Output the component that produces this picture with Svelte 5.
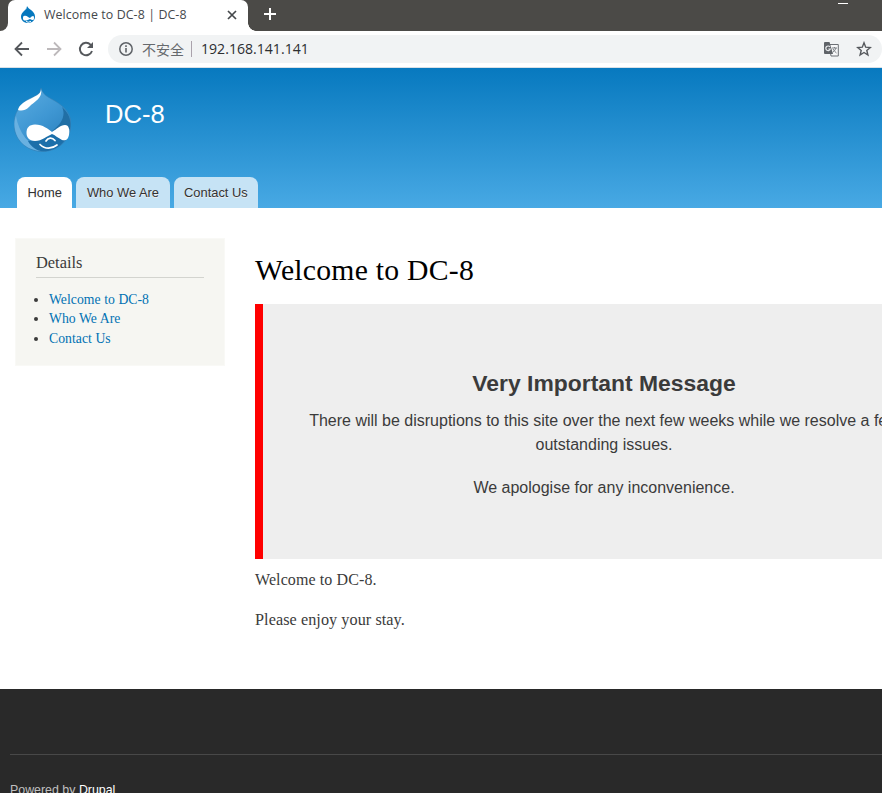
<script>
  const tabs = ['Home', 'Who We Are', 'Contact Us'];
  const links = ['Welcome to DC-8', 'Who We Are', 'Contact Us'];
</script>

{#snippet drop(w, h)}
  <svg class="drop" width={w} height={h} viewBox="0 0 57 65" aria-hidden="true">
    <defs>
      <linearGradient id="dropFill" x1="0" y1="0" x2=".7" y2="1">
        <stop offset="0" stop-color="#5daee2" />
        <stop offset=".55" stop-color="#3f97d3" />
        <stop offset="1" stop-color="#2a80bd" />
      </linearGradient>
    </defs>
    <path d="M27 1C29 8 34 10 41 14C51 20 57 27 57 37C57 53 44 64.500 28.500 64.500C12 64.500 0 52 0 37C0 26 6 18 13 13C20 9 27 8 27 1Z" fill="url(#dropFill)" stroke="#3a7fae" stroke-width=".5" />
    <path d="M2 29C5 46 14 58 31 64C12 65 0.500 52 0.500 37C0.500 34 1 31 2 29Z" fill="#69b1e1" />
    <path d="M48 20C52 28 48 37 38 44L56 42C58 33 54 25 48 20Z" fill="#216fa5" />
    <path d="M27 2C29 11 21 14 15 20C11 24 7 24 4 23C5 18 10 15 14 13C21 9 27 8 27 2Z" fill="#fff" />
    <path d="M14 54C22 55 31 47 38 47L51 53C45 61 37 64.300 29 64.300C23 64 17 60 14 54Z" fill="#1c6faa" />
    <path d="M21 37.500C29 37.500 34 42 38 45C43 42 46 38 51 38C55 38 56 43 55 48C54 53 51 54 48 53C44 51 41 48 38 47C33 49 28 54 21 54C15 54 12.500 50 12.500 46C12.500 41 15 37.500 21 37.500Z" fill="#fff" />
    <path d="M32 54C34 50.500 38 50 41 53.500M26 57.500C31 62.500 38 62 43 58" fill="none" stroke="#fff" stroke-width="1.700" stroke-linecap="round" />
  </svg>
{/snippet}

<div class="window">
  <div class="titlebar">
    <div class="edge"></div>
    <div class="browser-tab">
      <svg width="16" height="17" viewBox="0 0 16 17">
        <path d="M7 0C8 3 15 5 15 10.500C15 14.500 12 17 8 17C4 17 1 14.500 1 10.500C1 6 7 4 7 0Z" fill="#0678be" />
        <path d="M7 1C7 4 4 4 2.500 7Z" fill="#8fc7e9" />
        <path d="M4 10C7 9 8 12 10 12C12 10 14 9 14 12C14 15 12 14 10 13C8 14 4 16 3 13C3 11 3 10 4 10Z" fill="#fff" />
        <path d="M6 15.500Q8 17 11 15.500" fill="none" stroke="#fff" />
      </svg>
      <span>Welcome to DC-8 | DC-8</span>
      <svg class="close" width="10" height="10" viewBox="0 0 10 10"><path d="M1 1L9 9M9 1L1 9" stroke="#45484b" stroke-width="1.700" /></svg>
    </div>
    <svg class="plus" width="12" height="12" viewBox="0 0 12 12"><path d="M6 0V12M0 6H12" stroke="#fff" stroke-width="2" /></svg>
    <i class="minimize"></i>
  </div>
  <div class="toolbar">
    <svg width="16" height="16" viewBox="0 0 16 16"><path d="M15 8H2M8 1.500L1.500 8L8 14.500" fill="none" stroke="#55585c" stroke-width="1.800" /></svg>
    <svg width="16" height="16" viewBox="0 0 16 16"><path d="M1 8H14M8 1.500L14.500 8L8 14.500" fill="none" stroke="#bdb9bb" stroke-width="1.800" /></svg>
    <svg width="16" height="16" viewBox="0 0 16 16"><path d="M14 10A6.200 6.200 0 1 1 12.500 3.600L14 5" fill="none" stroke="#55585c" stroke-width="1.900" /><path d="M15 1V7H9Z" fill="#55585c" /></svg>
    <div class="address">
      <svg width="14" height="14" viewBox="0 0 14 14"><circle cx="7" cy="7" r="6.200" fill="none" stroke="#5f6368" stroke-width="1.500" /><path d="M7 6V10.500M7 3.300V5" stroke="#5f6368" stroke-width="1.600" /></svg>
      <span class="unsafe">不安全</span>
      <span class="ip">192.168.141.141</span>
      <svg class="translate" width="15" height="15" viewBox="0 0 15 15">
        <path d="M5 2.500H14.300V14H7Z" fill="#f7f8f9" stroke="#6c7075" />
        <path d="M0 1Q0 0 1 0H5.500L9 12H1Q0 12 0 11Z" fill="#5f6368" />
        <path d="M6 5A2.300 2.300 0 1 0 6.300 7H4.300" fill="none" stroke="#e9ebed" stroke-width="1.200" />
        <path d="M8 6H13M10.500 5V6M12 6Q11 9 8.500 10.500M9 7Q10.500 9.500 12.500 11" fill="none" stroke="#7b7f84" />
      </svg>
      <svg width="16" height="16" viewBox="0 0 16 16"><path d="M8 1.800L9.700 6.200L14.300 6.500L10.800 9.500L11.900 14L8 11.500L4.100 14L5.200 9.500L1.700 6.500L6.300 6.200Z" fill="none" stroke="#55585c" stroke-width="1.400" /></svg>
    </div>
  </div>

  <header>
    <div class="brand">{@render drop(57, 65)}<span>DC-8</span></div>
    <nav>
      {#each tabs as tab, i}<a class:active={i === 0}>{tab}</a>{/each}
    </nav>
  </header>

  <main>
    <aside>
      <h2>Details</h2>
      <ul>
        {#each links as link}<li><a>{link}</a></li>{/each}
      </ul>
    </aside>
    <article>
      <h1>Welcome to DC-8</h1>
      <section>
        <h2>Very Important Message</h2>
        <p>There will be disruptions to this site over the next few weeks while we resolve a few<br />outstanding issues.</p>
        <p>We apologise for any inconvenience.</p>
      </section>
      <p class="body">Welcome to DC-8.</p>
      <p class="body second">Please enjoy your stay.</p>
    </article>
  </main>

  <footer><div>Powered by <a>Drupal</a></div></footer>
</div>

<style>
  * { box-sizing: border-box; }
  h1, h2, p, ul { margin: 0; padding: 0; font-weight: 400; }
  svg { display: block; flex: none; }
  .window { width: 882px; height: 793px; overflow: hidden; display: flex; flex-direction: column; background: #fff; color: #3b3b3b; font-family: "Liberation Sans", Arial, sans-serif; }
  .titlebar { height: 31px; flex: none; display: flex; background: #4b4a47; }
  .edge { width: 8px; background: #fff; }
  .edge::before { content: ""; display: block; height: 31px; background: #4b4a47; border-bottom-right-radius: 8px; }
  .browser-tab { width: 240px; display: flex; align-items: center; padding: 0 11px 2px 12px; background: #fff; border-radius: 7px 7px 0 0; position: relative; }
  .browser-tab::after { content: ""; position: absolute; left: 240px; bottom: 0; width: 8px; height: 8px; background: radial-gradient(circle at 100% 0, transparent 7.500px, #fff 8px); }
  .browser-tab span { margin-left: 8px; font: 12.400px/20px "Open Sans", sans-serif; letter-spacing: .09px; white-space: nowrap; color: #45484c; }
  .close { margin: 1px 0 0 auto; }
  .plus { margin: 8px 0 0 16px; }
  .minimize { width: 10px; height: 1px; background: #fff; margin: 3px 34px 0 auto; }
  .toolbar { height: 37px; flex: none; display: flex; align-items: center; gap: 16px; padding: 0 0 1px 14px; border-bottom: 1px solid #d9e0e6; }
  .address { flex: 1; height: 28px; margin-left: -2px; border-radius: 14px; background: #f1f3f4; display: flex; align-items: center; padding: 0 10px 0 11px; }
  .unsafe { margin-left: 9px; padding-right: 7px; border-right: 1px solid #aaa2ac; font: 14px/16px "Noto Sans CJK SC", sans-serif; color: #66696d; }
  .ip { margin-left: 9px; font: 14.100px/20px "Open Sans", sans-serif; color: #2c2e31; }
  .translate { margin: 1px 17px 0 auto; }
  header { height: 140px; flex: none; display: flex; flex-direction: column; justify-content: space-between; background: linear-gradient(#0779bf, #48a9e4); }
  .brand { display: flex; padding: 19px 0 0 14px; }
  .brand span { margin: 12px 0 0 34px; font-size: 25.600px; line-height: 30px; color: #fff; }
  nav { display: flex; gap: 4px; padding-left: 17px; }
  nav a { height: 31px; padding: 0 10.500px; border-radius: 8px 8px 0 0; background: #c6e3f5; font-size: 12.900px; line-height: 31px; color: #333; text-shadow: 0 1px #eee; }
  nav a.active { background: #fff; }
  main { height: 481px; flex: none; display: flex; padding: 30px 0 0 15px; font-family: "Liberation Serif", serif; }
  aside { width: 210px; height: 128px; flex: none; padding: 14px 21px; background: #f6f6f2; border: 1px solid #f9f9f6; }
  aside h2 { width: 168px; height: 25px; margin-left: -1px; border-bottom: 1px solid #d3d4cf; font-size: 16.400px; line-height: 20px; }
  ul { margin: 12px 0 0 12px; font-size: 13.700px; letter-spacing: .05px; line-height: 19.400px; }
  li { list-style: disc; }
  li a { color: #0071b3; }
  article { width: 690px; flex: none; margin-left: 30px; }
  h1 { height: 66px; padding-top: 14px; font-size: 29.700px; letter-spacing: .25px; line-height: 36px; color: #000; }
  section { height: 255px; padding-top: 65px; border-left: 8px solid #f00; background: #eee; text-align: center; font-family: "Liberation Sans", Arial, sans-serif; }
  section h2 { font-size: 22.900px; line-height: 28px; font-weight: 700; }
  section p { margin-top: 12px; font-size: 16px; line-height: 24px; white-space: nowrap; }
  section p + p { margin-top: 19px; }
  .body { margin-top: 11px; font-size: 16px; letter-spacing: .1px; line-height: 20px; }
  .second { margin-top: 20px; font-size: 16.200px; letter-spacing: .07px; }
  footer { flex: 1; background: #292929; padding: 65px 0 0 10px; }
  footer div { border-top: 1px solid #484848; padding-top: 27px; font-size: 12.400px; line-height: 16px; color: #c0c0c0; }
  footer a { color: #fff; }
</style>
